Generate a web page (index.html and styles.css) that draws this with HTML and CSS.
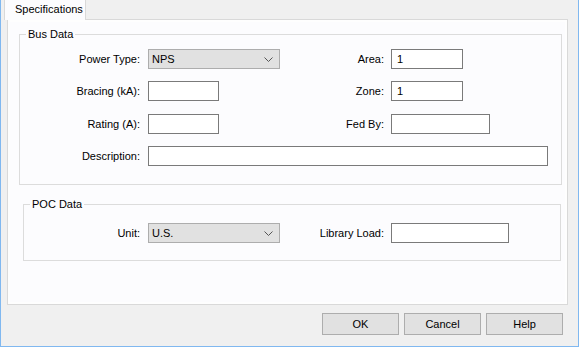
FILE: index.html
```html
<!DOCTYPE html>
<html lang="en">

<head>
    <meta charset="UTF-8">
    <meta name="viewport" content="width=device-width, initial-scale=1.0">
    <title>Bus Specifications</title>
    <link rel="stylesheet" href="styles.css">
</head>

<body>
    <div class="window">
        <!-- tabs -->
        <div class="tabs">
            <div class="tab active">Specifications</div>
        </div>

        <div class="panel">
            <!-- Bus Data -->
            <fieldset class="group bus-group">
                <legend>Bus Data</legend>
                <div class="form-grid bus-grid">
                    <label class="lbl">Power Type:</label>
                    <div class="combo"><span>NPS</span>
                        <svg class="chev" width="9" height="5" viewBox="0 0 9 5"><polyline points="0.5,0.5 4.5,4.5 8.5,0.5" fill="none" stroke="#555" stroke-width="1"/></svg>
                    </div>
                    <label class="lbl">Area:</label>
                    <input class="field w-72" type="text" value="1">

                    <label class="lbl">Bracing (kA):</label>
                    <input class="field w-71" type="text">
                    <label class="lbl">Zone:</label>
                    <input class="field w-72" type="text" value="1">

                    <label class="lbl">Rating (A):</label>
                    <input class="field w-71" type="text">
                    <label class="lbl">Fed By:</label>
                    <input class="field w-99" type="text">

                    <label class="lbl">Description:</label>
                    <input class="field w-400 span-3" type="text">
                </div>
            </fieldset>

            <!-- POC Data -->
            <fieldset class="group poc-group">
                <legend>POC Data</legend>
                <div class="form-grid poc-grid">
                    <label class="lbl">Unit:</label>
                    <div class="combo"><span>U.S.</span>
                        <svg class="chev" width="9" height="5" viewBox="0 0 9 5"><polyline points="0.5,0.5 4.5,4.5 8.5,0.5" fill="none" stroke="#555" stroke-width="1"/></svg>
                    </div>
                    <label class="lbl">Library Load:</label>
                    <input class="field w-118" type="text">
                </div>
            </fieldset>
        </div>

        <!-- dialog buttons -->
        <div class="btn-row">
            <button class="btn" type="button">OK</button>
            <button class="btn" type="button">Cancel</button>
            <button class="btn" type="button">Help</button>
        </div>
    </div>
</body>

</html>
```

FILE: styles.css
```css
* {
    margin: 0;
    padding: 0;
    box-sizing: border-box;
}

body {
    font-family: "Liberation Sans", Arial, sans-serif;
    font-size: 11px;
    color: #000;
    background-color: #f0f0f0;
}

.window {
    width: 579px;
    height: 347px;
    background-color: #f0f0f0;
    border-left: 1px solid #80b8f0;
    border-right: 1px solid #80b8f0;
    border-bottom: 1px solid #80b8f0;
}

/* tabs */
.tabs {
    display: flex;
    height: 19px;
    padding-left: 3px;
}

.tab {
    height: 20px;
    line-height: 19px;
    padding: 0 10px 0 10px;
    width: 82px;
}

.tab.active {
    background-color: #fcfcfe;
    border-left: 1px solid #d9d9d9;
    border-right: 1px solid #d9d9d9;
    position: relative;
    z-index: 1;
}

.panel {
    margin-left: 6px;
    width: 561px;
    height: 286px;
    background-color: #fcfcfe;
    border: 1px solid #d9d9d9;
    box-shadow: inset 0 0 0 2px #fefefe;
    display: flex;
    flex-direction: column;
}

/* group boxes */
.group {
    border: 1px solid #dcdcdc;
    padding: 0;
}

.group legend {
    margin-left: 6px;
    padding: 0 2px;
    line-height: 13px;
}

.bus-group {
    margin: 8px 0 0 11px;
    width: 543px;
}

.poc-group {
    margin: 13px 0 0 15px;
    width: 538px;
}

.form-grid {
    display: grid;
    align-items: start;
}

.bus-grid {
    grid-template-columns: 128px 131px 112px 1fr;
    grid-template-rows: 32px 33px 32px 20px;
    padding: 8px 0 18px 0;
}

.poc-grid {
    grid-template-columns: 124px 131px 112px 1fr;
    grid-template-rows: 20px;
    padding: 12px 0 17px 0;
}

.lbl {
    height: 20px;
    line-height: 20px;
    text-align: right;
    padding-right: 8px;
    white-space: nowrap;
}

.form-grid .lbl:nth-child(4n+3) {
    padding-right: 7px;
}

.field {
    height: 20px;
    border: 1px solid #7a7a7a;
    background-color: #fff;
    font-family: inherit;
    font-size: 11px;
    padding: 0 5px;
    color: #000;
    outline: none;
}

.w-71 { width: 71px; }
.w-72 { width: 72px; }
.w-99 { width: 99px; }
.w-118 { width: 118px; }
.w-400 { width: 400px; }

.span-3 {
    grid-column: 2 / 5;
}

.combo {
    width: 132px;
    height: 20px;
    background-color: #e1e1e1;
    border: 1px solid #adadad;
    display: flex;
    align-items: center;
    justify-content: space-between;
    padding: 0 6px 0 3px;
}

.chev {
    display: block;
}

/* buttons */
.btn-row {
    display: flex;
    justify-content: flex-end;
    gap: 5px;
    margin-top: 8px;
    padding-right: 15px;
}

.btn {
    width: 77px;
    height: 22px;
    background-color: #e1e1e1;
    border: 1px solid #adadad;
    font-family: inherit;
    font-size: 11px;
    color: #000;
}
```
